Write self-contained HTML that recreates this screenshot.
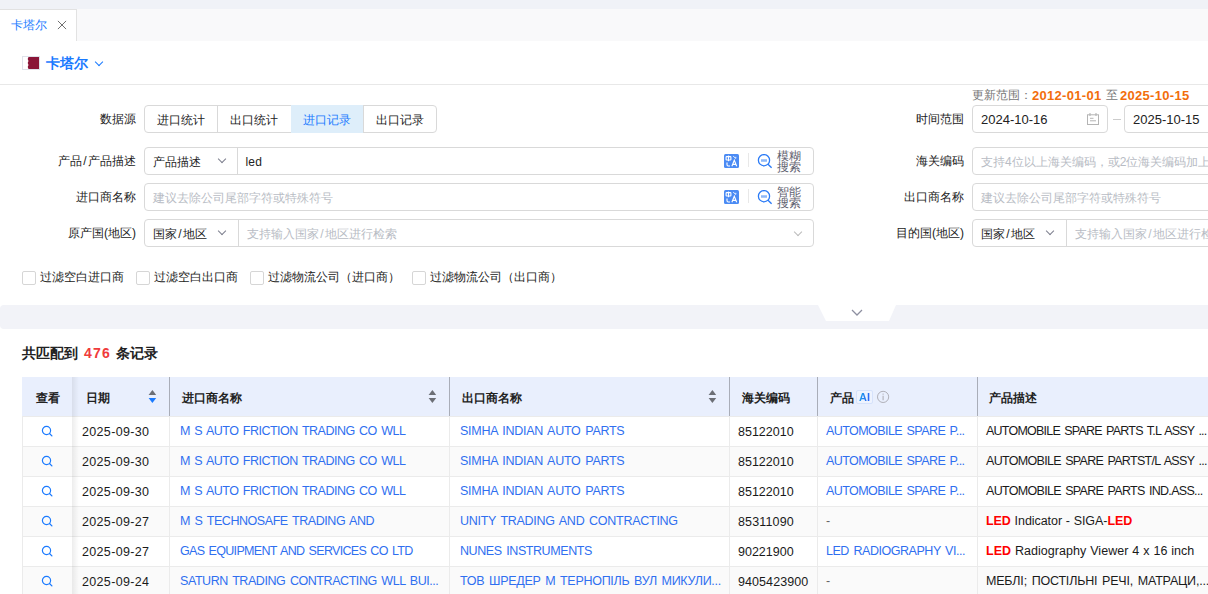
<!DOCTYPE html>
<html><head><meta charset="utf-8">
<style>
*{box-sizing:border-box;margin:0;padding:0}
html,body{width:1208px;height:594px;overflow:hidden;background:#fff}
body{position:relative;font-family:"Liberation Sans",sans-serif;font-size:12px;color:#222}
.a{position:absolute}
.top{left:0;top:0;width:1208px;height:9px;background:#f0f2f7}
.tabbar{left:0;top:9px;width:1208px;height:32px;background:#f9f9fa}
.tab{left:0;top:9px;width:77px;height:32px;background:#fff;border-top:1px solid #e2e2e2;border-right:1px solid #e2e2e2}
.blue{color:#1a7aff}
.lbl{position:absolute;text-align:right;width:120px;font-size:12px;color:#222;line-height:14px}
.inp{position:absolute;height:28px;border:1px solid #d9d9d9;border-radius:4px;background:#fff}
.ph{color:#b8bcc4}
.chev{position:absolute;width:6px;height:6px;border-right:1px solid #7d7f8e;border-bottom:1px solid #7d7f8e;transform:rotate(45deg)}
.cb{position:absolute;width:14px;height:14px;margin-top:1px;border:1px solid #d6d6d6;border-radius:2px;background:#fff}
.cbt{position:absolute;font-size:12px;color:#222;line-height:14px}
.th{font-size:12px;font-weight:bold;line-height:39px;color:#222;white-space:nowrap}
.td{font-size:12.5px;line-height:30px;color:#1a1a1a;white-space:nowrap}
.lk{color:#2f6ff0}
.dash{color:#666}
.r{color:#f00}
</style></head><body>
<div class="a top"></div>
<div class="a tabbar"></div>
<div class="a tab"></div>
<div class="a blue" style="left:11px;top:18px;font-size:12px;line-height:14px">卡塔尔</div>
<svg class="a" style="left:57px;top:20px" width="10" height="10" viewBox="0 0 10 10"><path d="M0.9 0.9L9.1 9.1M9.1 0.9L0.9 9.1" stroke="#707070" stroke-width="1"/></svg>

<!-- country header -->
<svg class="a" style="left:22px;top:56px" width="18" height="14" viewBox="0 0 18 14"><rect x="0.5" y="0.5" width="17" height="13" fill="#fff" stroke="#dfe2ea"/><path d="M17 1H6.5L5.7 3L6.5 5L5.7 7L6.5 9L5.7 11L6.5 13H17Z" fill="#8a1538"/></svg>

<div class="a blue" style="left:46px;top:55px;font-size:14px;font-weight:bold;line-height:16px">卡塔尔</div>
<div class="chev" style="left:96px;top:59px;border-color:#1a7aff"></div>
<div class="a" style="left:0;top:84px;width:1208px;height:1px;background:#e8e8e8"></div>

<!-- form rows -->
<div class="lbl" style="left:16px;top:112px">数据源</div>
<div class="inp" style="left:144px;top:105px;width:293px;height:28px"></div>
<div class="a" style="left:217px;top:106px;width:1px;height:26px;background:#d9d9d9"></div>
<div class="a" style="left:291px;top:105px;width:72px;height:28px;background:#deeefa"></div>
<div class="a" style="left:363px;top:106px;width:1px;height:26px;background:#d9d9d9"></div>
<div class="a" style="left:157px;top:113px;line-height:14px">进口统计</div>
<div class="a" style="left:230px;top:113px;line-height:14px">出口统计</div>
<div class="a blue" style="left:303px;top:113px;line-height:14px">进口记录</div>
<div class="a" style="left:376px;top:113px;line-height:14px">出口记录</div>

<div class="lbl" style="left:16px;top:154px">产品<span style="margin:0 1.3px">/</span>产品描述</div>
<div class="inp" style="left:144px;top:147px;width:670px"></div>
<div class="a" style="left:237px;top:148px;width:1px;height:26px;background:#d9d9d9"></div>
<div class="a" style="left:153px;top:155px;line-height:14px">产品描述</div>
<div class="chev" style="left:219px;top:156px"></div>
<div class="a" style="left:245.5px;top:155px;line-height:14px;letter-spacing:0.2px">led</div>

<div class="lbl" style="left:16px;top:190px">进口商名称</div>
<div class="inp" style="left:144px;top:183px;width:670px"></div>
<div class="a ph" style="left:153px;top:191px;line-height:14px">建议去除公司尾部字符或特殊符号</div>

<svg class="a" style="left:724px;top:154px" width="15" height="14" viewBox="0 0 15 14"><rect x="0" y="0" width="15" height="14" rx="1.5" fill="#4b8bf4"/><rect x="2.1" y="2.6" width="4.8" height="3.4" rx="0.6" fill="none" stroke="#fff" stroke-width="1.1"/><path d="M4.5 1.6V7.2" stroke="#fff" stroke-width="1.1"/><path d="M3 8.6V10.8Q3 12 4.2 12H6" fill="none" stroke="#fff" stroke-width="1.1"/><path d="M7.9 12.2L10.3 6.2L12.7 12.2M8.8 10.4H11.8" fill="none" stroke="#fff" stroke-width="1.1"/><path d="M9.2 2.2L11.8 4.4M11.8 4.4V2.8" fill="none" stroke="#fff" stroke-width="0.9"/></svg>
<div class="a" style="left:748px;top:153px;width:1px;height:14px;background:#e8e8e8"></div>
<svg class="a" style="left:757px;top:154px" width="16" height="15" viewBox="0 0 16 15"><circle cx="7" cy="6.2" r="5.6" fill="none" stroke="#2b7bf6" stroke-width="1.3"/><path d="M4 5.8H10M4 7.2H10" stroke="#8db8f8" stroke-width="1.3"/><path d="M11 10.3L14.6 13.8" stroke="#2b7bf6" stroke-width="1.4"/></svg>
<div class="a" style="left:777px;top:151px;width:26px;font-size:12px;line-height:11px;color:#5f6270">模糊<br>搜索</div>
<svg class="a" style="left:724px;top:190px" width="15" height="14" viewBox="0 0 15 14"><rect x="0" y="0" width="15" height="14" rx="1.5" fill="#4b8bf4"/><rect x="2.1" y="2.6" width="4.8" height="3.4" rx="0.6" fill="none" stroke="#fff" stroke-width="1.1"/><path d="M4.5 1.6V7.2" stroke="#fff" stroke-width="1.1"/><path d="M3 8.6V10.8Q3 12 4.2 12H6" fill="none" stroke="#fff" stroke-width="1.1"/><path d="M7.9 12.2L10.3 6.2L12.7 12.2M8.8 10.4H11.8" fill="none" stroke="#fff" stroke-width="1.1"/><path d="M9.2 2.2L11.8 4.4M11.8 4.4V2.8" fill="none" stroke="#fff" stroke-width="0.9"/></svg>
<div class="a" style="left:748px;top:189px;width:1px;height:14px;background:#e8e8e8"></div>
<svg class="a" style="left:757px;top:190px" width="16" height="15" viewBox="0 0 16 15"><circle cx="7" cy="6.2" r="5.6" fill="none" stroke="#2b7bf6" stroke-width="1.3"/><path d="M4 5.8H10M4 7.2H10" stroke="#8db8f8" stroke-width="1.3"/><path d="M11 10.3L14.6 13.8" stroke="#2b7bf6" stroke-width="1.4"/></svg>
<div class="a" style="left:777px;top:187px;width:26px;font-size:12px;line-height:11px;color:#5f6270">智能<br>搜索</div>
<div class="lbl" style="left:16px;top:226px">原产国(地区)</div>
<div class="inp" style="left:144px;top:219px;width:670px"></div>
<div class="a" style="left:238px;top:220px;width:1px;height:26px;background:#d9d9d9"></div>
<div class="a" style="left:153px;top:227px;line-height:14px">国家<span style="margin:0 1.2px">/</span>地区</div>
<div class="chev" style="left:219px;top:228px"></div>
<div class="a ph" style="left:247px;top:227px;line-height:14px">支持输入国家<span style="margin:0 1.2px">/</span>地区进行检索</div>
<div class="chev" style="left:795px;top:229px;border-color:#bbb"></div>

<!-- right side -->
<div class="a" style="left:972px;top:88px;line-height:14px;color:#777;white-space:nowrap">更新范围：</div>
<div class="a" style="left:1032px;top:89px;line-height:14px;color:#f26e0c;font-size:13px;font-weight:bold;letter-spacing:0.3px;white-space:nowrap">2012-01-01</div>
<div class="a" style="left:1106px;top:88px;line-height:14px;color:#777;white-space:nowrap">至</div>
<div class="a" style="left:1120px;top:89px;line-height:14px;color:#f26e0c;font-size:13px;font-weight:bold;letter-spacing:0.3px;white-space:nowrap">2025-10-15</div>
<div class="lbl" style="left:844px;top:112px">时间范围</div>
<div class="inp" style="left:972px;top:105px;width:136px"></div>
<div class="a" style="left:981px;top:112px;line-height:15px;font-size:13px">2024-10-16</div>
<svg class="a" style="left:1087px;top:113px" width="12" height="12" viewBox="0 0 12 12"><rect x="0.5" y="1.8" width="11" height="9.7" fill="none" stroke="#b4b4b4" stroke-width="1"/><path d="M3 0V3M9 0V3" stroke="#b4b4b4" stroke-width="1.1"/><path d="M3 5.3H6.5M3 7.8H9" stroke="#b4b4b4" stroke-width="1"/></svg>
<div class="a" style="left:1113px;top:119px;width:8px;height:1px;background:#ccc"></div>
<div class="inp" style="left:1124px;top:105px;width:120px"></div>
<div class="a" style="left:1133px;top:112px;line-height:15px;font-size:13px">2025-10-15</div>

<div class="lbl" style="left:844px;top:154px">海关编码</div>
<div class="inp" style="left:972px;top:147px;width:300px"></div>
<div class="a ph" style="left:981px;top:155px;line-height:14px;white-space:nowrap">支持4位以上海关编码，或2位海关编码加上</div>

<div class="lbl" style="left:844px;top:190px">出口商名称</div>
<div class="inp" style="left:972px;top:183px;width:300px"></div>
<div class="a ph" style="left:981px;top:191px;line-height:14px">建议去除公司尾部字符或特殊符号</div>

<div class="lbl" style="left:844px;top:226px">目的国(地区)</div>
<div class="inp" style="left:972px;top:219px;width:300px"></div>
<div class="a" style="left:1066px;top:220px;width:1px;height:26px;background:#d9d9d9"></div>
<div class="a" style="left:981px;top:227px;line-height:14px">国家<span style="margin:0 1.2px">/</span>地区</div>
<div class="chev" style="left:1047px;top:228px"></div>
<div class="a ph" style="left:1075px;top:227px;line-height:14px;white-space:nowrap">支持输入国家<span style="margin:0 1.2px">/</span>地区进行检索</div>

<!-- checkboxes -->
<div class="cb" style="left:22px;top:270px"></div><div class="cbt" style="left:40px;top:270px">过滤空白进口商</div>
<div class="cb" style="left:136px;top:270px"></div><div class="cbt" style="left:154px;top:270px">过滤空白出口商</div>
<div class="cb" style="left:250px;top:270px"></div><div class="cbt" style="left:268px;top:270px">过滤物流公司（进口商）</div>
<div class="cb" style="left:412px;top:270px"></div><div class="cbt" style="left:430px;top:270px">过滤物流公司（出口商）</div>

<!-- gray band -->
<div class="a" style="left:0;top:305px;width:1208px;height:24px;background:#f2f3f8;border-radius:4px 0 0 4px"></div>
<svg class="a" style="left:818px;top:305px" width="78" height="16"><path d="M0 0H78L71 16H8Z" fill="#fff"/><path d="M34 5L39 10L44 5" fill="none" stroke="#8d8fa0" stroke-width="1.25"/></svg>

<!-- TABLE placeholder -->
<div class="a" style="left:22px;top:345px;font-size:14px;font-weight:bold;line-height:16px;color:#222">共匹配到</div>
<div class="a" style="left:84px;top:345px;font-size:14px;font-weight:bold;line-height:16px;color:#f03b3b;letter-spacing:1.2px">476</div>
<div class="a" style="left:116px;top:345px;font-size:14px;font-weight:bold;line-height:16px;color:#222">条记录</div>
<div class="a" style="left:22px;top:377px;width:1186px;height:39px;background:#e9effd"></div>
<div class="a" style="left:169px;top:377px;width:1px;height:39px;background:#a9adb8"></div>
<div class="a" style="left:449px;top:377px;width:1px;height:39px;background:#a9adb8"></div>
<div class="a" style="left:729px;top:377px;width:1px;height:39px;background:#a9adb8"></div>
<div class="a" style="left:817px;top:377px;width:1px;height:39px;background:#a9adb8"></div>
<div class="a" style="left:977px;top:377px;width:1px;height:39px;background:#a9adb8"></div>
<div class="a th" style="left:36px;top:379px">查看</div>
<div class="a th" style="left:86px;top:379px">日期</div>
<div class="a th" style="left:182px;top:379px">进口商名称</div>
<div class="a th" style="left:462px;top:379px">出口商名称</div>
<div class="a th" style="left:742px;top:379px">海关编码</div>
<div class="a th" style="left:830px;top:379px">产品</div>
<div class="a th" style="left:989px;top:379px">产品描述</div>
<div class="a" style="left:22px;top:416px;width:1186px;height:30px;background:#fff"></div>
<svg class="a" style="left:41px;top:425px" width="13" height="13" viewBox="0 0 13 13"><circle cx="5.5" cy="5.5" r="4.1" fill="none" stroke="#1a7aff" stroke-width="1.2"/><path d="M8.5 8.5L10.9 10.9" stroke="#1a7aff" stroke-width="1.3" stroke-linecap="round"/></svg>
<div class="a td " style="left:82px;top:417px;letter-spacing:0.333px;word-spacing:1.5px">2025-09-30</div>
<div class="a td lk" style="left:180px;top:416px;letter-spacing:-0.516px;word-spacing:1.5px">M S AUTO FRICTION TRADING CO WLL</div>
<div class="a td lk" style="left:460px;top:416px;letter-spacing:-0.264px;word-spacing:1.5px">SIMHA INDIAN AUTO PARTS</div>
<div class="a td " style="left:738px;top:417px;letter-spacing:0.0px;word-spacing:1.5px">85122010</div>
<div class="a td lk" style="left:826px;top:416px;letter-spacing:-0.56px;word-spacing:1.5px">AUTOMOBILE SPARE P...</div>
<div class="a td " style="left:986px;top:416px;letter-spacing:-0.768px;word-spacing:1.5px">AUTOMOBILE SPARE PARTS T.L ASSY ...</div>
<div class="a" style="left:22px;top:446px;width:1186px;height:30px;background:#fafafa"></div>
<svg class="a" style="left:41px;top:455px" width="13" height="13" viewBox="0 0 13 13"><circle cx="5.5" cy="5.5" r="4.1" fill="none" stroke="#1a7aff" stroke-width="1.2"/><path d="M8.5 8.5L10.9 10.9" stroke="#1a7aff" stroke-width="1.3" stroke-linecap="round"/></svg>
<div class="a td " style="left:82px;top:447px;letter-spacing:0.333px;word-spacing:1.5px">2025-09-30</div>
<div class="a td lk" style="left:180px;top:446px;letter-spacing:-0.516px;word-spacing:1.5px">M S AUTO FRICTION TRADING CO WLL</div>
<div class="a td lk" style="left:460px;top:446px;letter-spacing:-0.264px;word-spacing:1.5px">SIMHA INDIAN AUTO PARTS</div>
<div class="a td " style="left:738px;top:447px;letter-spacing:0.0px;word-spacing:1.5px">85122010</div>
<div class="a td lk" style="left:826px;top:446px;letter-spacing:-0.56px;word-spacing:1.5px">AUTOMOBILE SPARE P...</div>
<div class="a td " style="left:986px;top:446px;letter-spacing:-0.685px;word-spacing:1.5px">AUTOMOBILE SPARE PARTST/L ASSY ...</div>
<div class="a" style="left:22px;top:476px;width:1186px;height:30px;background:#fff"></div>
<svg class="a" style="left:41px;top:485px" width="13" height="13" viewBox="0 0 13 13"><circle cx="5.5" cy="5.5" r="4.1" fill="none" stroke="#1a7aff" stroke-width="1.2"/><path d="M8.5 8.5L10.9 10.9" stroke="#1a7aff" stroke-width="1.3" stroke-linecap="round"/></svg>
<div class="a td " style="left:82px;top:477px;letter-spacing:0.333px;word-spacing:1.5px">2025-09-30</div>
<div class="a td lk" style="left:180px;top:476px;letter-spacing:-0.516px;word-spacing:1.5px">M S AUTO FRICTION TRADING CO WLL</div>
<div class="a td lk" style="left:460px;top:476px;letter-spacing:-0.264px;word-spacing:1.5px">SIMHA INDIAN AUTO PARTS</div>
<div class="a td " style="left:738px;top:477px;letter-spacing:0.0px;word-spacing:1.5px">85122010</div>
<div class="a td lk" style="left:826px;top:476px;letter-spacing:-0.56px;word-spacing:1.5px">AUTOMOBILE SPARE P...</div>
<div class="a td " style="left:986px;top:476px;letter-spacing:-0.684px;word-spacing:1.5px">AUTOMOBILE SPARE PARTS IND.ASS...</div>
<div class="a" style="left:22px;top:506px;width:1186px;height:30px;background:#fafafa"></div>
<svg class="a" style="left:41px;top:515px" width="13" height="13" viewBox="0 0 13 13"><circle cx="5.5" cy="5.5" r="4.1" fill="none" stroke="#1a7aff" stroke-width="1.2"/><path d="M8.5 8.5L10.9 10.9" stroke="#1a7aff" stroke-width="1.3" stroke-linecap="round"/></svg>
<div class="a td " style="left:82px;top:507px;letter-spacing:0.333px;word-spacing:1.5px">2025-09-27</div>
<div class="a td lk" style="left:180px;top:506px;letter-spacing:-0.44px;word-spacing:1.5px">M S TECHNOSAFE TRADING AND</div>
<div class="a td lk" style="left:460px;top:506px;letter-spacing:-0.268px;word-spacing:1.5px">UNITY TRADING AND CONTRACTING</div>
<div class="a td " style="left:738px;top:507px;letter-spacing:0.143px;word-spacing:1.5px">85311090</div>
<div class="a td dash" style="left:826px;top:506px;letter-spacing:0px;word-spacing:1.5px">-</div>
<div class="a td " style="left:986px;top:506px;letter-spacing:-0.065px;word-spacing:0.4px"><b class="r">LED</b> Indicator - SIGA-<b class="r">LED</b></div>
<div class="a" style="left:22px;top:536px;width:1186px;height:30px;background:#fff"></div>
<svg class="a" style="left:41px;top:545px" width="13" height="13" viewBox="0 0 13 13"><circle cx="5.5" cy="5.5" r="4.1" fill="none" stroke="#1a7aff" stroke-width="1.2"/><path d="M8.5 8.5L10.9 10.9" stroke="#1a7aff" stroke-width="1.3" stroke-linecap="round"/></svg>
<div class="a td " style="left:82px;top:537px;letter-spacing:0.333px;word-spacing:1.5px">2025-09-27</div>
<div class="a td lk" style="left:180px;top:536px;letter-spacing:-0.694px;word-spacing:1.5px">GAS EQUIPMENT AND SERVICES CO LTD</div>
<div class="a td lk" style="left:460px;top:536px;letter-spacing:-0.419px;word-spacing:1.5px">NUNES INSTRUMENTS</div>
<div class="a td " style="left:738px;top:537px;letter-spacing:0.0px;word-spacing:1.5px">90221900</div>
<div class="a td lk" style="left:826px;top:536px;letter-spacing:-0.46px;word-spacing:1.5px">LED RADIOGRAPHY VI...</div>
<div class="a td " style="left:986px;top:536px;letter-spacing:0.036px;word-spacing:0.4px"><b class="r">LED</b> Radiography Viewer 4 x 16 inch</div>
<div class="a" style="left:22px;top:566px;width:1186px;height:30px;background:#fafafa"></div>
<svg class="a" style="left:41px;top:575px" width="13" height="13" viewBox="0 0 13 13"><circle cx="5.5" cy="5.5" r="4.1" fill="none" stroke="#1a7aff" stroke-width="1.2"/><path d="M8.5 8.5L10.9 10.9" stroke="#1a7aff" stroke-width="1.3" stroke-linecap="round"/></svg>
<div class="a td " style="left:82px;top:567px;letter-spacing:0.333px;word-spacing:1.5px">2025-09-24</div>
<div class="a td lk" style="left:180px;top:566px;letter-spacing:-0.436px;word-spacing:1.5px">SATURN TRADING CONTRACTING WLL BUI...</div>
<div class="a td lk" style="left:460px;top:566px;letter-spacing:-0.286px;word-spacing:1.5px">ТОВ ШРЕДЕР М ТЕРНОПІЛЬ ВУЛ МИКУЛИ...</div>
<div class="a td " style="left:738px;top:567px;letter-spacing:0.078px;word-spacing:1.5px">9405423900</div>
<div class="a td dash" style="left:826px;top:566px;letter-spacing:0px;word-spacing:1.5px">-</div>
<div class="a td " style="left:986px;top:566px;letter-spacing:-0.197px;word-spacing:1.5px">МЕБЛІ; ПОСТІЛЬНІ РЕЧІ, МАТРАЦИ,...</div>
<div class="a" style="left:22px;top:416px;width:1186px;height:1px;background:#ebebeb"></div>
<div class="a" style="left:22px;top:446px;width:1186px;height:1px;background:#ebebeb"></div>
<div class="a" style="left:22px;top:476px;width:1186px;height:1px;background:#ebebeb"></div>
<div class="a" style="left:22px;top:506px;width:1186px;height:1px;background:#ebebeb"></div>
<div class="a" style="left:22px;top:536px;width:1186px;height:1px;background:#ebebeb"></div>
<div class="a" style="left:22px;top:566px;width:1186px;height:1px;background:#ebebeb"></div>
<div class="a" style="left:22px;top:596px;width:1186px;height:1px;background:#ebebeb"></div>
<div class="a" style="left:22px;top:416px;width:1px;height:178px;background:#ebebeb"></div>
<div class="a" style="left:169px;top:416px;width:1px;height:178px;background:#ebebeb"></div>
<div class="a" style="left:449px;top:416px;width:1px;height:178px;background:#ebebeb"></div>
<div class="a" style="left:729px;top:416px;width:1px;height:178px;background:#ebebeb"></div>
<div class="a" style="left:817px;top:416px;width:1px;height:178px;background:#ebebeb"></div>
<div class="a" style="left:977px;top:416px;width:1px;height:178px;background:#ebebeb"></div>
<div class="a" style="left:72px;top:377px;width:7px;height:217px;background:linear-gradient(to right,rgba(0,0,0,0.07),rgba(0,0,0,0))"></div>
<svg class="a" style="left:147px;top:389px" width="10" height="15" viewBox="0 0 10 15"><path d="M1.6 6L5.4 1L9.2 6Z" fill="#6c6f76"/><path d="M1.6 9L9.2 9L5.4 14Z" fill="#1a7aff"/></svg>
<svg class="a" style="left:427px;top:389px" width="10" height="15" viewBox="0 0 10 15"><path d="M1.6 6L5.4 1L9.2 6Z" fill="#6c6f76"/><path d="M1.6 9L9.2 9L5.4 14Z" fill="#6c6f76"/></svg>
<svg class="a" style="left:707px;top:389px" width="10" height="15" viewBox="0 0 10 15"><path d="M1.6 6L5.4 1L9.2 6Z" fill="#6c6f76"/><path d="M1.6 9L9.2 9L5.4 14Z" fill="#6c6f76"/></svg>
<div class="a" style="left:856px;top:390px;width:17px;height:14px;border:1px solid #d6e2fb;border-radius:2px;background:#eef3fe"></div>
<div class="a" style="left:856px;top:391px;width:17px;height:13px;font-size:11px;font-weight:bold;line-height:13px;text-align:center;background:linear-gradient(100deg,#17b8e6,#2a6af5 70%);-webkit-background-clip:text;background-clip:text;color:transparent">AI</div>
<svg class="a" style="left:876px;top:390px" width="14" height="14" viewBox="0 0 14 14"><circle cx="7.1" cy="6.9" r="5.6" fill="none" stroke="#b0b0b8" stroke-width="1"/><path d="M7.1 5.8V10.2" stroke="#b0b0b8" stroke-width="1.1"/><circle cx="7.1" cy="4.1" r="0.7" fill="#b0b0b8"/></svg>
</body></html>
